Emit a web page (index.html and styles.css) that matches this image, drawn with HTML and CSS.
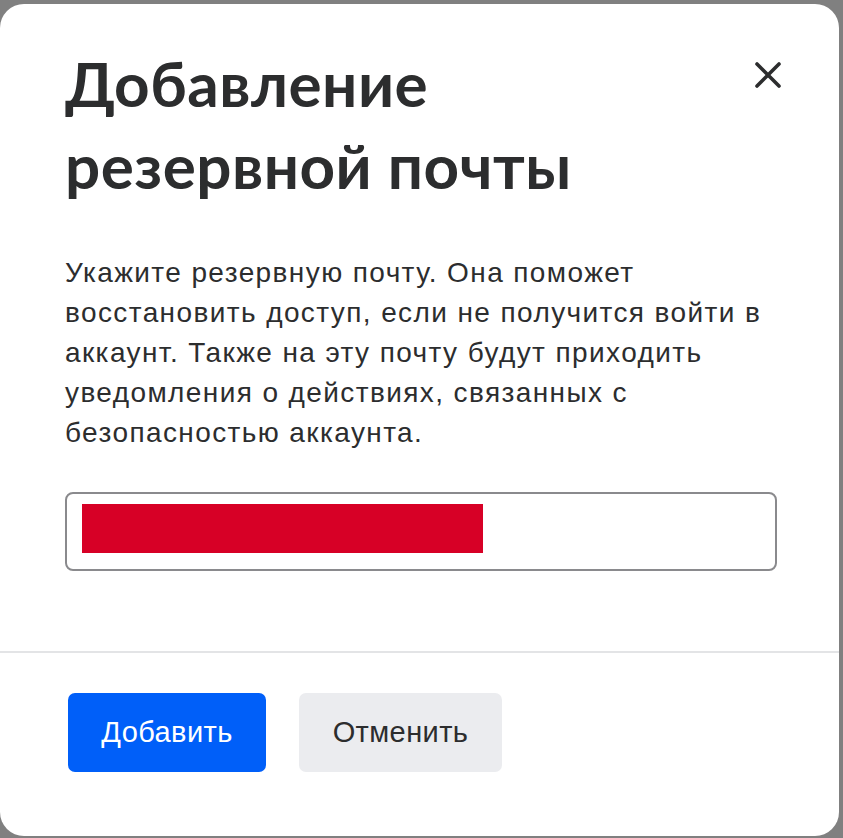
FILE: index.html
```html
<!DOCTYPE html>
<html lang="ru">
<head>
<meta charset="utf-8">
<link rel="stylesheet" href="styles.css">
</head>
<body>
<div class="dialog">
  <div class="content">
    <div class="head">
      <h1 class="title">Добавление резервной почты</h1>
      <button class="close" aria-label="Закрыть">
        <svg width="28" height="28" viewBox="0 0 28 28"><path d="M3 3L25 25M25 3L3 25" stroke="#2c2d2e" stroke-width="3.6" stroke-linecap="round"/></svg>
      </button>
    </div>
    <p class="text">Укажите резервную почту. Она поможет восстановить доступ, если не получится войти в аккаунт. Также на эту почту будут приходить уведомления о действиях, связанных с безопасностью аккаунта.</p>
    <div class="input"><div class="redact"></div></div>
  </div>
  <div class="footer">
    <button class="btn primary">Добавить</button>
    <button class="btn secondary">Отменить</button>
  </div>
</div>
</body>
</html>
```
FILE: styles.css
```css
html, body { margin: 0; padding: 0; }
body { background: #808080; height: 838px; overflow: hidden; font-family: "Liberation Sans", Arial, sans-serif; }
.dialog {
  margin-top: 4px;
  width: 839px;
  height: 832px;
  background: #fff;
  border-radius: 24px;
  box-sizing: border-box;
}
.content { padding: 38px 57px 0 65px; height: 649px; box-sizing: border-box; border-bottom: 2px solid #e3e4e6; }
.head { display: flex; justify-content: space-between; align-items: flex-start; }
.title {
  margin: 0;
  font-family: Lato, "Open Sans", sans-serif;
  font-weight: 700;
  font-size: 62px;
  line-height: 82px;
  color: #2c2d2e;
  width: 560px;
  letter-spacing: 0.5px;
}
.close { border: 0; background: none; padding: 0; margin: 19px 0 0 0; width: 28px; height: 28px; cursor: pointer; }
.close svg { display: block; }
.text {
  margin: 47px 0 0 0;
  font-size: 28px;
  line-height: 40px;
  letter-spacing: 1.4px;
  color: #2c2d2e;
  width: 714px;
}
.input {
  margin-top: 39px;
  width: 712px;
  height: 79px;
  box-sizing: border-box;
  border: 2px solid #8a8a8d;
  border-radius: 8px;
  padding: 10px 15px;
}
.redact { width: 401px; height: 49px; background: #d70026; }
.footer { display: flex; gap: 33px; padding: 40px 0 0 68px; }
.btn {
  height: 79px;
  border: 0;
  border-radius: 7px;
  font-family: "Liberation Sans", Arial, sans-serif;
  font-size: 29px;
  letter-spacing: 0.4px;
  padding: 0;
}
.primary { width: 198px; background: #005ff9; color: #fff; }
.secondary { width: 203px; background: #ebecef; color: #2c2d2e; }
```
